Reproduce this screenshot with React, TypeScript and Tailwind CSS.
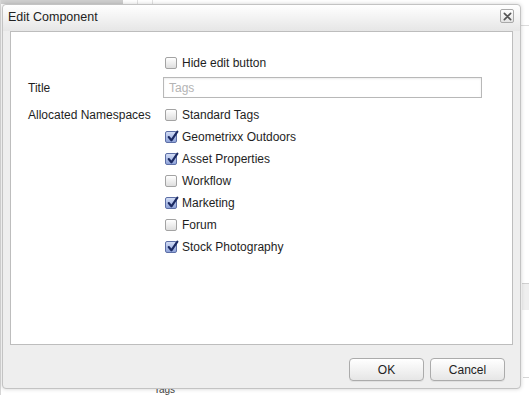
import React from "react";

const namespaces = [
  { label: "Standard Tags", checked: false },
  { label: "Geometrixx Outdoors", checked: true },
  { label: "Asset Properties", checked: true },
  { label: "Workflow", checked: false },
  { label: "Marketing", checked: true },
  { label: "Forum", checked: false },
  { label: "Stock Photography", checked: true },
];

const Checkbox = ({ checked }: { checked: boolean }) =>
  checked ? (
    <span className="relative block h-[12px] w-[12px] shrink-0 rounded-[2px] border border-[#5d6fa6] bg-gradient-to-b from-[#d3ddf5] to-[#8fa3d9]">
      <svg
        viewBox="0 0 12 12"
        className="absolute left-[0px] top-[-2px] h-[13px] w-[13px]"
      >
        <path
          d="M2.5 6.5 L5 9.5 L10.5 1.5"
          fill="none"
          stroke="#1b2a63"
          strokeWidth="2"
          strokeLinecap="round"
          strokeLinejoin="round"
        />
      </svg>
    </span>
  ) : (
    <span className="block h-[12px] w-[12px] shrink-0 rounded-[2px] border border-[#a3a3a3] bg-gradient-to-b from-white to-[#dedede]" />
  );

const CheckRow = ({ label, checked }: { label: string; checked: boolean }) => (
  <label className="flex h-[22px] items-center gap-[5px] pl-[2px]">
    <Checkbox checked={checked} />
    <span>{label}</span>
  </label>
);

const DialogButton = ({ children }: { children: React.ReactNode }) => (
  <button className="h-[23px] w-[75px] rounded-[4px] border border-[#ababab] bg-gradient-to-b from-white to-[#e6e6e6] text-[12px] text-[#222] shadow-[0_1px_0_rgba(0,0,0,0.06)]">
    {children}
  </button>
);

export default function App() {
  return (
    <div className="relative h-[395px] w-[529px] overflow-hidden bg-white font-['Liberation_Sans',Arial,sans-serif] text-[12px] text-[#1e1e1e]">
      {/* page behind the dialog */}
      <div className="absolute left-0 top-0 h-[4px] w-[123px] bg-[#cfcfcf]" />
      <div className="absolute left-[137px] top-0 h-[4px] w-px bg-[#e2e2e2]" />
      <div className="absolute left-[152px] top-0 h-[4px] w-px bg-[#e2e2e2]" />
      <div className="absolute left-0 top-0 h-[395px] w-px bg-[#d6d6d6]" />
      <div className="absolute right-0 top-[25px] h-px w-[8px] bg-[#dcdcdc]" />
      <div className="absolute right-0 top-[283px] h-[27px] w-[7px] border-t border-[#d0d0d0] bg-[#efefef]" />
      <div className="absolute right-0 top-[377px] h-px w-[6px] bg-[#d6d6d6]" />
      <span className="absolute left-[154px] top-[385px] text-[10px] leading-[10px] text-[#444]">Tags</span>

      {/* dialog */}
      <div className="absolute left-[2px] top-[4px] flex h-[385px] w-[519px] flex-col rounded-[4px] border border-[#c3c3c3] bg-[#eeeeee] shadow-[0_0_4px_rgba(0,0,0,0.18)]">
        <div className="flex h-[26px] items-start justify-between rounded-t-[4px] bg-gradient-to-b from-white to-[#e6e6e6] pl-[5px] pr-[6px] pt-[4px]">
          <span className="text-[12.5px] leading-[16px] text-[#222]">Edit Component</span>
          <button className="flex h-[14px] w-[14px] items-center justify-center rounded-[2px] border border-[#a9a9a9] bg-gradient-to-b from-white to-[#e4e4e4]">
            <svg viewBox="0 0 10 10" className="h-[9px] w-[9px]">
              <path
                d="M1.5 1.5 L8.5 8.5 M8.5 1.5 L1.5 8.5"
                stroke="#555"
                strokeWidth="1.8"
                strokeLinecap="round"
              />
            </svg>
          </button>
        </div>

        <div className="mx-[7px] h-[314px] border border-[#bdbdbd] bg-white pl-[17px] pt-[20px]">
          <div className="flex">
            <div className="w-[135px]" />
            <CheckRow label="Hide edit button" checked={false} />
          </div>

          <div className="mt-[3px] flex items-center">
            <div className="w-[135px]">Title</div>
            <div className="flex h-[21px] w-[319px] items-center border border-[#b8b8b8] bg-white pl-[5px] text-[#b4b4b4] shadow-[inset_0_1px_2px_rgba(0,0,0,0.08)]">
              Tags
            </div>
          </div>

          <div className="mt-[6px] flex">
            <div className="flex h-[22px] w-[135px] items-center">Allocated Namespaces</div>
            <div className="flex flex-col">
              {namespaces.map((ns) => (
                <CheckRow key={ns.label} label={ns.label} checked={ns.checked} />
              ))}
            </div>
          </div>
        </div>

        <div className="flex flex-1 items-start justify-end gap-[6px] pr-[15px] pt-[13px]">
          <DialogButton>OK</DialogButton>
          <DialogButton>Cancel</DialogButton>
        </div>
      </div>
    </div>
  );
}
